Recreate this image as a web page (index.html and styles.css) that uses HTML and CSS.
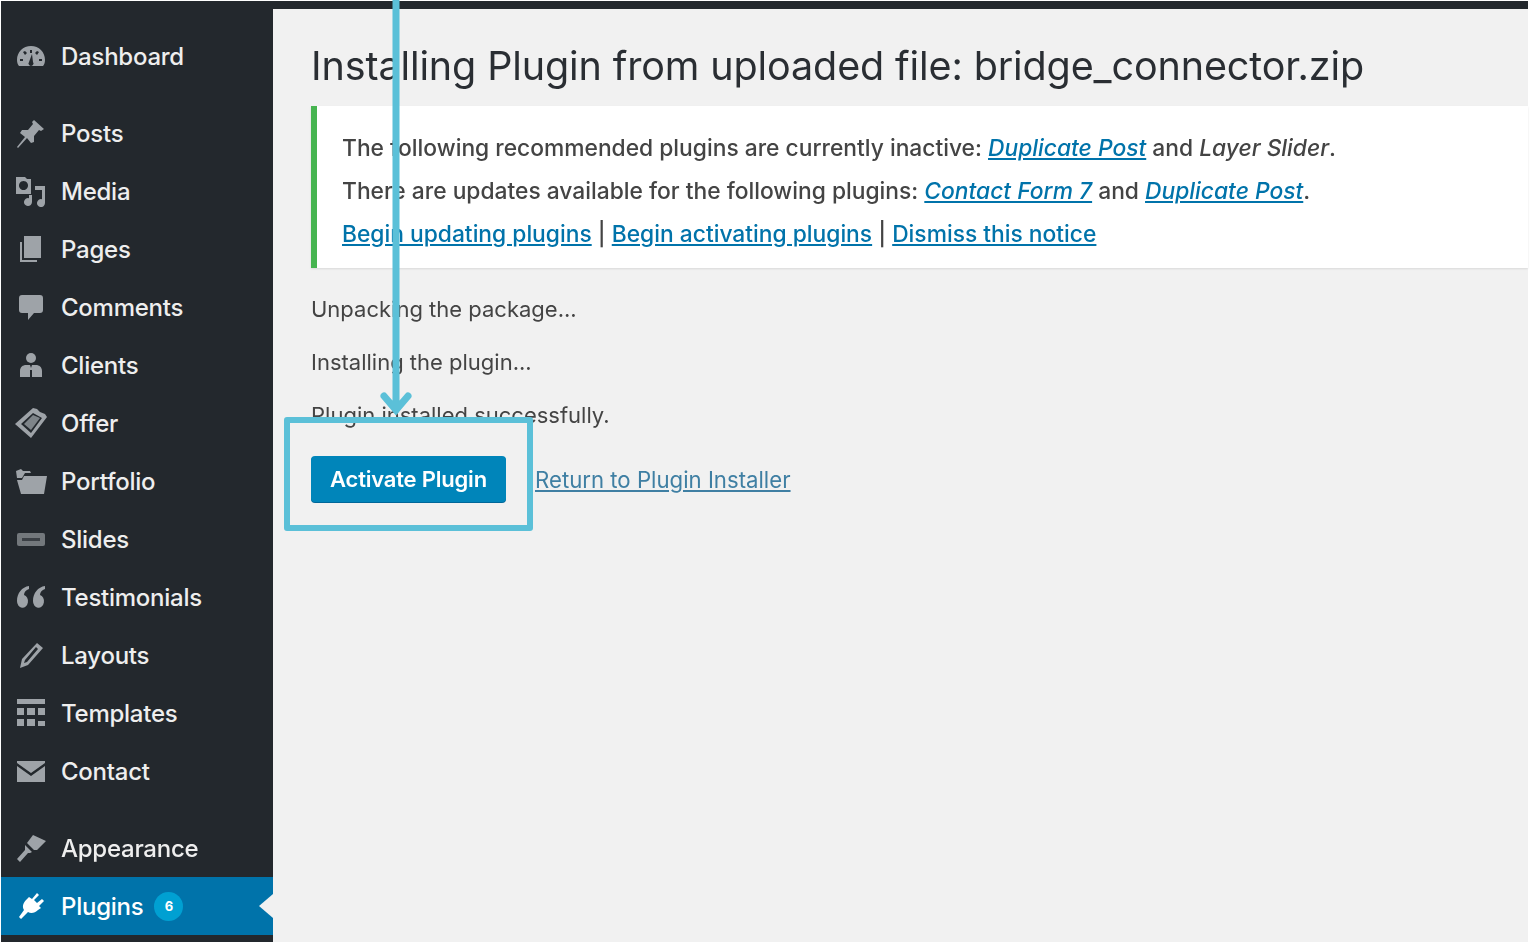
FILE: index.html
```html
<!DOCTYPE html>
<html lang="en">
<head>
    <meta charset="UTF-8">
    <title>Installing Plugin</title>
    <link rel="stylesheet" href="styles.css">
</head>
<body>
    <div class="page">
        <nav class="sidebar">
            <a class="item"><svg class="icon" viewBox="0 0 32 32"><path d="M16 6C8 6 2 12 2 20c0 3 1 5 2 6h24c1-1 2-3 2-6 0-8-6-14-14-14zM15 10h2v3h-2zM8 12l2-1 2 2-2 2zM24 12l-2-1-2 2 2 2zM5 19h3v2H5zM24 19h3v2h-3zM17 14l1 8a2.500 2.500 0 1 1-4 0z" fill-rule="evenodd"/></svg><span>Dashboard</span></a>
            <div class="sep"></div>
            <a class="item"><svg class="icon" viewBox="0 0 32 32"><path d="M19 3l10 9-3 2-2-1-5 6 0 6-3 1-4-5-9 10-1-1 8-10-5-4 2-3 6 0 5-6-1-2z"/></svg><span>Posts</span></a>
            <a class="item"><svg class="icon" viewBox="0 0 32 32"><path d="M1 2h9l2 2h4v15H1zM8.500 6a4.500 4.500 0 1 0 .01 0zM20 11h10v17a4 4 0 1 1-3-3.800V15h-7zM17 22v5a4 4 0 1 1-3-3.800V20h3z" fill-rule="evenodd"/></svg><span>Media</span></a>
            <a class="item"><svg class="icon" viewBox="0 0 32 32"><path d="M9 3h17v22H9zM5 9h2v18h15v2H5z"/></svg><span>Pages</span></a>
            <a class="item"><svg class="icon" viewBox="0 0 32 32"><path d="M7 4h18a3 3 0 0 1 3 3v12a3 3 0 0 1-3 3h-6l-6 7v-7H7a3 3 0 0 1-3-3V7a3 3 0 0 1 3-3z"/></svg><span>Comments</span></a>
            <a class="item"><svg class="icon" viewBox="0 0 32 32"><circle cx="16" cy="9" r="5"/><path d="M11 16h4l1 3 1-3h4c3 0 6 2 6 6v6H5v-6c0-4 3-6 6-6zM15 21v7h2v-7z" fill-rule="evenodd"/></svg><span>Clients</span></a>
            <a class="item"><svg class="icon" viewBox="0 0 32 32"><path d="M18 1l4 1 3 3 5 2 2 3-16 21L0 17zM18 6L6 17l10 9 11-15z" fill-rule="evenodd"/><path d="M18 8l7 3-9 12-7-6z" opacity=".75"/></svg><span>Offer</span></a>
            <a class="item"><svg class="icon" viewBox="0 0 32 32"><path d="M1 6l5-2 2 2h7l1 2h-6L7 13H2zM9 11h23l-3 18H6L2 15h5z"/></svg><span>Portfolio</span></a>
            <a class="item"><svg class="icon" viewBox="0 0 32 32"><path d="M4 10h24a2 2 0 0 1 2 2v9a2 2 0 0 1-2 2H4a2 2 0 0 1-2-2v-9a2 2 0 0 1 2-2z" opacity=".65"/><path d="M7 15h18v3H7z" fill="#23282d" opacity=".7"/></svg><span>Slides</span></a>
            <a class="item"><svg class="icon" viewBox="0 0 32 32"><path d="M14 5v3c-3 1-5 3-5 6a5.500 6.500 0 1 1-7 6c0-8 5-14 12-15zM30 5v3c-3 1-5 3-5 6a5.500 6.500 0 1 1-7 6c0-8 5-14 12-15z"/></svg><span>Testimonials</span></a>
            <a class="item"><svg class="icon" viewBox="0 0 32 32"><path d="M22 4l6 5-15 17-8 3 2-9zM10 21l-1 3 3-1 11-13-2-2z" fill-rule="evenodd"/></svg><span>Layouts</span></a>
            <a class="item"><svg class="icon" viewBox="0 0 32 32"><path d="M2 2h28v5H2zM2 11h7v7H2zM12 11h8v7h-8zM23 11h7v7h-7zM2 22h7v7H2zM12 22h8v7h-8zM23 24h7v5h-7z"/></svg><span>Templates</span></a>
            <a class="item"><svg class="icon" viewBox="0 0 32 32"><path d="M2 6h28v2L16 18 2 8zM2 11l14 10 14-10v16H2z"/></svg><span>Contact</span></a>
            <div class="sep"></div>
            <a class="item"><svg class="icon" viewBox="0 0 32 32"><path d="M18 3l13 6-9 9-3 0-7-7zM10 13l7 7-2 1-2 0-8 9-3-3 8-9 0-3z"/></svg><span>Appearance</span></a>
            <a class="item current"><svg class="icon" viewBox="0 0 32 32"><path d="M22 3l2 2-5 5 3 3 5-4 2 2-5 5 2 2-3 2c-3 3-7 4-10 2l-7 7-2-2 5-7c-2-3-1-7 2-10l3-3 3 2z"/></svg><span>Plugins</span><span class="badge">6</span></a>
        </nav>
        <main class="content">
            <h1>Installing Plugin from uploaded file: bridge_connector.zip</h1>
            <div class="notice">
                <p>The following recommended plugins are currently inactive: <a href="#"><em>Duplicate Post</em></a> and <em>Layer Slider</em>.</p>
                <p>There are updates available for the following plugins: <a href="#"><em>Contact Form 7</em></a> and <a href="#"><em>Duplicate Post</em></a>.</p>
                <p><a href="#">Begin updating plugins</a> | <a href="#">Begin activating plugins</a> | <a href="#">Dismiss this notice</a></p>
            </div>
            <p class="step">Unpacking the package...</p>
            <p class="step">Installing the plugin...</p>
            <p class="step">Plugin installed successfully.</p>
            <div class="actions">
                <a class="button" href="#">Activate Plugin</a>
                <a class="back" href="#">Return to Plugin Installer</a>
            </div>
        </main>
    </div>

    <!-- annotation drawn over the screenshot -->
    <svg class="arrow" viewBox="0 0 40 420"><path d="M20 0V410M8 396L20 410L32 396" /></svg>
    <div class="callout"></div>
</body>
</html>
```

FILE: styles.css
```css
body {
    margin: 0;
    background-color: #fff;
    font-family: Inter, "Noto Sans", sans-serif;
    color: #444;
    overflow: hidden;
}
.page {
    display: flex;
    height: 941px;
    margin: 1px 2px 0 1px;
    background-color: #f1f1f1;
    filter: blur(0.6px);
}
.sidebar {
    width: 272px;
    flex-shrink: 0;
    box-sizing: border-box;
    padding-top: 26px;
    background-color: #23282d;
}
.item {
    display: flex;
    align-items: center;
    height: 58px;
    padding-left: 14px;
    color: #eee;
    font-size: 24px;
    font-weight: 500;
    letter-spacing: -0.25px;
}
.item span:first-of-type {
    margin-left: 14px;
}
.icon {
    width: 32px;
    height: 32px;
    fill: #9ea3a8;
}
.sep {
    height: 19px;
}
.current {
    position: relative;
    background-color: #0073aa;
    color: #fff;
}
.current .icon {
    fill: #fff;
}
.current::after {
    content: "";
    position: absolute;
    right: 0;
    top: 17px;
    border: 12px solid transparent;
    border-left-width: 0;
    border-right: 14px solid #f1f1f1;
}
.item .badge {
    display: flex;
    align-items: center;
    justify-content: center;
    width: 29px;
    height: 29px;
    margin-left: 11px;
    border-radius: 50%;
    background-color: #00a0d2;
    font-size: 13px;
    font-weight: 700;
}
.content {
    flex: 1;
    min-width: 0;
    border-top: 8px solid #23282d;
    padding-left: 38px;
}
h1 {
    margin: 31px 0 14px;
    font-size: 39.5px;
    line-height: 52px;
    font-weight: 400;
    color: #2a2e33;
    letter-spacing: -0.12px;
    white-space: nowrap;
}
.notice {
    box-sizing: border-box;
    height: 162px;
    padding: 20px 0 0 25px;
    border-left: 6px solid #46b450;
    background-color: #fff;
    box-shadow: 0 1px 2px rgba(0, 0, 0, 0.1);
    font-size: 22.8px;
    font-weight: 500;
    white-space: nowrap;
}
.notice p {
    margin: 0;
    line-height: 43px;
}
.notice a, .back {
    color: #0073aa;
    text-decoration: underline;
}
.step {
    margin: 0;
    padding-top: 20px;
    line-height: 33px;
    font-size: 22px;
}
.step:first-of-type {
    padding-top: 25px;
}
.actions {
    display: flex;
    align-items: center;
    margin-top: 24px;
    font-size: 22.2px;
}
.button {
    box-sizing: border-box;
    width: 195px;
    height: 46px;
    line-height: 46px;
    font-size: 22px;
    text-align: center;
    border-radius: 4px;
    background-color: #0085ba;
    box-shadow: 0 1px 0 #006799;
    color: #fff;
    font-weight: 600;
    letter-spacing: -0.2px;
    text-decoration: none;
}
.back {
    margin-left: 29px;
    color: #3f7fa3;
}
.arrow {
    position: absolute;
    left: 376px;
    top: 0;
    width: 40px;
    height: 420px;
    fill: none;
    stroke: #5bc0d8;
    stroke-width: 7px;
    stroke-linecap: round;
}
.callout {
    position: absolute;
    left: 284px;
    top: 417px;
    width: 237px;
    height: 102px;
    border: 6px solid #5bc0d8;
    border-radius: 3px;
}
```
